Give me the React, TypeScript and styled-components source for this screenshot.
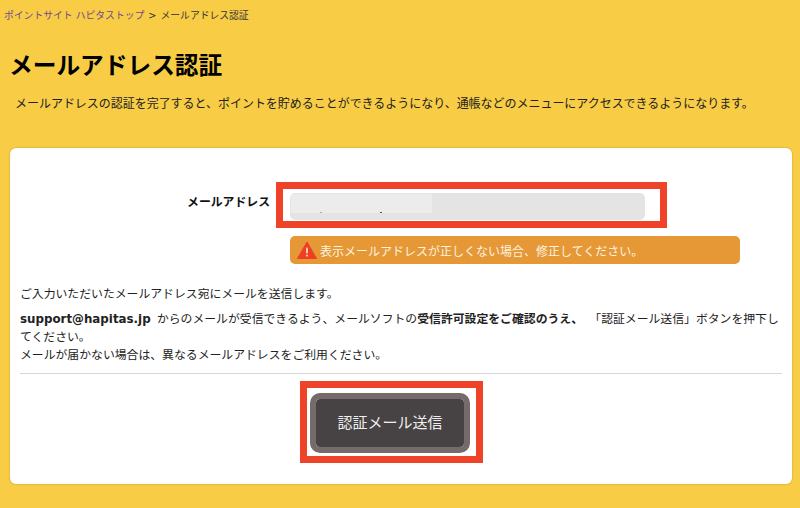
import React from "react";
import styled, { createGlobalStyle } from "styled-components";

const Global = createGlobalStyle`
  html, body { margin: 0; padding: 0; background: #f8cd45; }
  body { font-family: "DejaVu Sans", "Noto Sans CJK JP", sans-serif; }
`;

const Page = styled.div`
  width: 800px;
  height: 508px;
  overflow: hidden;
  background: #f8cd45;
  color: #222;
  display: flex;
  flex-direction: column;
`;

const Breadcrumb = styled.nav`
  display: flex;
  align-items: center;
  gap: 4px;
  padding: 8px 0 0 4px;
  height: 15px;
  font-size: 9.8px;
  line-height: 15px;
  color: #333;
`;

const CrumbLink = styled.a`
  color: #6f4a8e;
`;

const Title = styled.h1`
  margin: 25px 0 0 9px;
  font-size: 23.7px;
  line-height: 36px;
  font-weight: 700;
  color: #000;
`;

const Lead = styled.p`
  margin: 11px 0 0 15px;
  font-size: 11.98px;
  line-height: 18px;
  color: #222;
  white-space: nowrap;
`;

const Card = styled.section`
  box-sizing: border-box;
  width: 782px;
  height: 336px;
  margin: 35px 0 0 10px;
  padding: 34px 10px 0;
  background: #fff;
  border-radius: 6px;
  box-shadow: 0 0 2px rgba(120, 90, 0, 0.45);
`;

const FieldRow = styled.div`
  display: flex;
  align-items: flex-start;
`;

const Label = styled.label`
  box-sizing: border-box;
  width: 256px;
  padding: 11px 6px 0 0;
  text-align: right;
  font-size: 11.85px;
  line-height: 18px;
  font-weight: 700;
  color: #111;
`;

const Highlight = styled.div`
  box-sizing: border-box;
  border: 7px solid #ee4229;
`;

const FieldHighlight = styled(Highlight)`
  width: 391px;
  height: 46px;
  padding: 4px 15px 0 7px;
`;

const FakeInput = styled.div`
  height: 27px;
  padding-top: 1px;
  box-sizing: border-box;
  border-radius: 5px;
  background: #e4e4e4;
  overflow: hidden;
`;

const Redacted = styled.div`
  display: flex;
  align-items: flex-end;
  width: 141px;
  height: 19px;
  margin-left: 1px;
  background: #ececec;
`;

const Speck = styled.span<{ $offset: number; $dark?: boolean }>`
  width: 2px;
  height: 1px;
  margin-left: ${(p) => p.$offset}px;
  background: ${(p) => (p.$dark ? "#555" : "#aaa")};
`;

const Alert = styled.div`
  box-sizing: border-box;
  display: flex;
  align-items: center;
  gap: 3px;
  width: 450px;
  height: 28px;
  margin: 8px 0 0 270px;
  padding-left: 7px;
  border-radius: 5px;
  background: #e59835;
  color: #fdf3e0;
  font-size: 12px;
  white-space: nowrap;
`;

const Body = styled.div`
  margin-top: 21px;
  font-size: 11.85px;
  word-spacing: 2.5px;
  line-height: 18px;
  color: #222;
`;

const Para = styled.p<{ $gap: number }>`
  margin: 0 0 ${(p) => p.$gap}px;
`;

const Divider = styled.hr`
  height: 1px;
  margin: 0;
  border: 0;
  background: #d6d6d6;
`;

const ButtonRow = styled.div`
  display: flex;
  justify-content: center;
  margin-top: 7px;
  padding-right: 19px;
`;

const ButtonHighlight = styled(Highlight)`
  width: 183px;
  height: 82px;
  padding: 5px 6px 3px 3px;
`;

const SendButton = styled.button`
  box-sizing: border-box;
  display: block;
  width: 160px;
  height: 60px;
  margin: 0 auto;
  padding: 0 0 4px;
  border: 6px solid #766b6b;
  border-radius: 10px;
  background: #474344;
  background-clip: padding-box;
  color: #eeeeee;
  font-family: inherit;
  font-size: 15px;
`;

function WarningIcon() {
  return (
    <svg width="20" height="18" viewBox="0 0 20 18" aria-hidden="true">
      <path d="M10 1 L19.5 17.5 H0.5 Z" fill="#ee3f25" stroke="#ee3f25" strokeLinejoin="round" />
      <rect x="9" y="6.5" width="2" height="6" rx="0.8" fill="#f6c9a8" />
      <circle cx="10" cy="14.6" r="1.1" fill="#f6c9a8" />
    </svg>
  );
}

export default function App() {
  return (
    <Page>
      <Global />
      <Breadcrumb>
        <CrumbLink>ポイントサイト ハピタストップ</CrumbLink>
        <span>&gt;</span>
        <span>メールアドレス認証</span>
      </Breadcrumb>
      <Title>メールアドレス認証</Title>
      <Lead>メールアドレスの認証を完了すると、ポイントを貯めることができるようになり、通帳などのメニューにアクセスできるようになります。</Lead>
      <Card>
        <FieldRow>
          <Label>メールアドレス</Label>
          <FieldHighlight>
            <FakeInput>
              <Redacted>
                <Speck $offset={29} />
                <Speck $offset={58} $dark />
              </Redacted>
            </FakeInput>
          </FieldHighlight>
        </FieldRow>
        <Alert>
          <WarningIcon />
          表示メールアドレスが正しくない場合、修正してください。
        </Alert>
        <Body>
          <Para $gap={7}>ご入力いただいたメールアドレス宛にメールを送信します。</Para>
          <Para $gap={9}>
            <strong>support@hapitas.jp</strong> からのメールが受信できるよう、メールソフトの<strong>受信許可設定をご確認のうえ、</strong> 「認証メール送信」ボタンを押下してください。
            <br />
            メールが届かない場合は、異なるメールアドレスをご利用ください。
          </Para>
        </Body>
        <Divider />
        <ButtonRow>
          <ButtonHighlight>
            <SendButton>認証メール送信</SendButton>
          </ButtonHighlight>
        </ButtonRow>
      </Card>
    </Page>
  );
}
